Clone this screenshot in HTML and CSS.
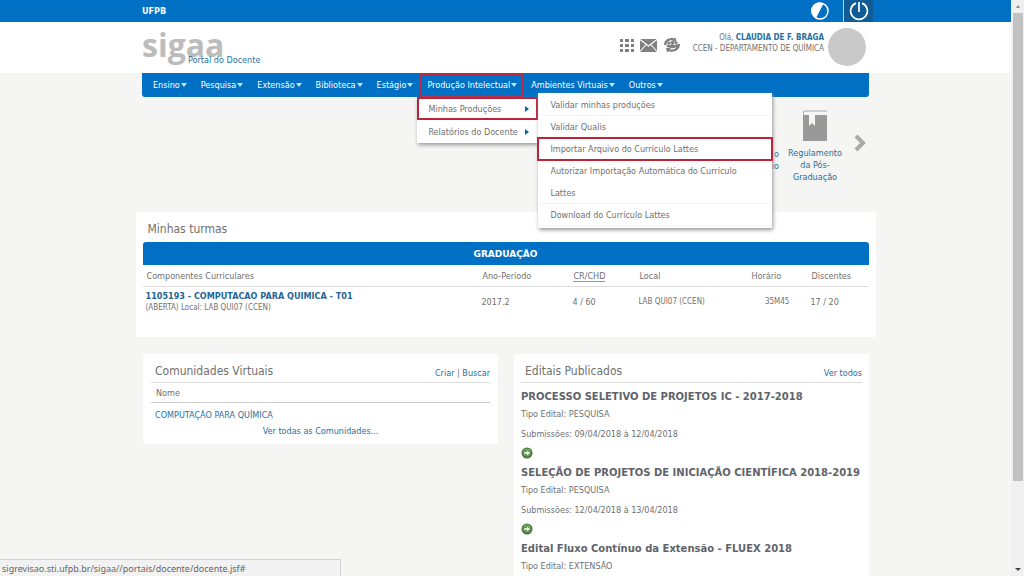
FILE: index.html
```html
<!DOCTYPE html>
<html lang="pt-BR">
<head>
<meta charset="utf-8">
<title>SIGAA - Portal do Docente</title>
<link rel="stylesheet" href="styles.css">
</head>
<body>
<div class="viewport">
  <div class="page">
    <div class="topbar">
      <div class="wrap topbar-row">
        <strong class="org">UFPB</strong>
        <div class="top-actions">
          <button class="icon-btn contrast" aria-label="Contraste">
            <svg width="18" height="18" viewBox="0 0 18 18"><circle cx="9" cy="9" r="8" fill="none" stroke="#fff" stroke-width="1.5"/><path d="M12.5 1.5A8.3 8.3 0 1 0 5 16.3z" fill="#fff"/></svg>
          </button>
          <button class="icon-btn power" aria-label="Sair">
            <svg width="20" height="20" viewBox="0 0 20 20" fill="none" stroke="#fff" stroke-width="1.7"><path d="M7 2.1A8.4 8.4 0 1 0 13 2.1M10 1v10"/></svg>
          </button>
        </div>
      </div>
    </div>
    <header class="header">
      <div class="wrap header-row">
        <div class="brand"><span class="logo">sigaa</span><a class="portal" href="#">Portal do Docente</a></div>
        <div class="user">
          <div class="shortcuts">
            <button class="icon-btn" aria-label="Módulos"><svg width="14" height="14" viewBox="0 0 14 14" fill="#808080"><path d="M0 1h3v3H0zM5 1h4v3H5zM11 1h3v3h-3zM0 6h3v3H0zM5 6h4v3H5zM11 6h3v3h-3zM0 11h3v3H0zM5 11h4v3H5zM11 11h3v3h-3z"/></svg></button>
            <button class="icon-btn" aria-label="Caixa postal"><svg width="17" height="14" viewBox="0 0 17 14"><path d="M0 1h17v13H0z" fill="#808080"/><path d="M0 1.500l8.500 6.500L17 1.500M0 13.500l6.200-7M17 13.500l-6.200-7" fill="none" stroke="#fff" stroke-width="1.100"/></svg></button>
            <button class="icon-btn" aria-label="Trocar vínculo"><svg width="18" height="16" viewBox="0 0 18 16" fill="#808080"><path d="M1 8C1 3 6 0 11 1.500l1.500-1 1 4h-4.500l1-1.200C6 2.500 3.500 5 3.500 8zM17 7c0 6-6 9-11 7.200l-2 1-1-4.200h5l-1.200 1.300c4 1 7.500-1.300 7.500-5.300z"/><circle cx="6" cy="6" r="1.600"/><circle cx="9.500" cy="5.500" r="1.800"/><circle cx="13" cy="5.800" r="1.600"/><path d="M3.500 10c0-3 3-3 3.500-1.500.7-1.800 4.300-1.800 5 0 .8-1.500 3.500-1.500 3.500 1.300l-3 .7c-2 1-5 1-6.500 0z"/></svg></button>
          </div>
          <div class="identity">
            <div>Olá, <a href="#" class="strong">CLAUDIA DE F. BRAGA</a></div>
            <div>CCEN - DEPARTAMENTO DE QUÍMICA</div>
          </div>
          <div class="avatar"></div>
        </div>
      </div>
    </header>
    <div class="wrap">
      <nav class="menu">
        <a class="menu-item" href="#">Ensino<i class="caret"></i></a>
        <a class="menu-item" href="#">Pesquisa<i class="caret"></i></a>
        <a class="menu-item" href="#">Extensão<i class="caret"></i></a>
        <a class="menu-item" href="#">Biblioteca<i class="caret"></i></a>
        <a class="menu-item" href="#">Estágio<i class="caret"></i></a>
        <div class="menu-open">
          <a class="menu-item marked" href="#">Produção Intelectual<i class="caret"></i></a>
          <div class="dropdown">
            <a class="drop-item marked" href="#">Minhas Produções<i class="arrow"></i></a>
            <a class="drop-item" href="#">Relatórios do Docente<i class="arrow"></i></a>
            <div class="submenu">
              <a class="sub-item" href="#">Validar minhas produções</a>
              <a class="sub-item" href="#">Validar Qualis</a>
              <a class="sub-item marked" href="#">Importar Arquivo do Currículo Lattes</a>
              <a class="sub-item" href="#">Autorizar Importação Automática do Currículo Lattes</a>
              <a class="sub-item" href="#">Download do Currículo Lattes</a>
            </div>
          </div>
        </div>
        <a class="menu-item" href="#">Ambientes Virtuais<i class="caret"></i></a>
        <a class="menu-item" href="#">Outros<i class="caret"></i></a>
      </nav>
      <section class="carousel">
        <a class="slide-prev" href="#">o<br>io</a>
        <a class="slide" href="#">
          <svg width="26" height="32" viewBox="0 0 26 32"><path d="M2 1h23M1.500 1v4" fill="none" stroke="#aaa"/><path d="M1 5h6v11l3-3 3 3V5h12v26H1z" fill="#999"/></svg>
          <span>Regulamento<br>da Pós-<br>Graduação</span>
        </a>
        <button class="icon-btn next" aria-label="Próximo"><svg width="12" height="18" viewBox="0 0 12 18"><path d="M2 2l7 7-7 7" fill="none" stroke="#aaa" stroke-width="4"/></svg></button>
      </section>
    </div>
    <section class="classes">
      <h2 class="title">Minhas turmas</h2>
      <table class="table">
        <colgroup><col><col class="c-period"><col class="c-cr"><col class="c-place"><col class="c-time"><col class="c-students"></colgroup>
        <thead>
          <tr><th class="band" colspan="6">GRADUAÇÃO</th></tr>
          <tr class="heads"><th>Componentes Curriculares</th><th>Ano-Período</th><th><abbr class="abbr">CR/CHD</abbr></th><th>Local</th><th>Horário</th><th>Discentes</th></tr>
        </thead>
        <tbody>
          <tr><td><a class="course" href="#">1105193 - COMPUTACAO PARA QUIMICA - T01</a><div class="small">(ABERTA) Local: LAB QUI07 (CCEN)</div></td><td>2017.2</td><td>4 / 60</td><td class="small">LAB QUI07 (CCEN)</td><td class="small time">35M45</td><td>17 / 20</td></tr>
        </tbody>
      </table>
    </section>
    <div class="wrap columns">
      <section class="card">
        <div class="card-head"><h2 class="title">Comunidades Virtuais</h2><span class="links"><a href="#">Criar</a> | <a href="#">Buscar</a></span></div>
        <div class="name-head">Nome</div>
        <a class="community" href="#">COMPUTAÇÃO PARA QUÍMICA</a>
        <a class="see-all" href="#">Ver todas as Comunidades...</a>
      </section>
      <section class="card notices">
        <div class="card-head"><h2 class="title">Editais Publicados</h2><a href="#" class="links">Ver todos</a></div>
        <article class="notice">
          <h3>PROCESSO SELETIVO DE PROJETOS IC - 2017-2018</h3>
          <p>Tipo Edital: PESQUISA</p><p>Submissões: 09/04/2018 à 12/04/2018</p>
          <a class="go" href="#" aria-label="Ver edital"><svg width="12" height="12" viewBox="0 0 12 12"><circle cx="6" cy="6" r="5.500" fill="#3f7a35"/><circle cx="6" cy="5.500" r="4" fill="#72a563"/><path d="M2.500 5h3V3l4 3-4 3V7h-3z" fill="#fff" stroke="#2f6b20" stroke-width=".5"/></svg></a>
        </article>
        <article class="notice">
          <h3>SELEÇÃO DE PROJETOS DE INICIAÇÃO CIENTÍFICA 2018-2019</h3>
          <p>Tipo Edital: PESQUISA</p><p>Submissões: 12/04/2018 à 13/04/2018</p>
          <a class="go" href="#" aria-label="Ver edital"><svg width="12" height="12" viewBox="0 0 12 12"><circle cx="6" cy="6" r="5.500" fill="#3f7a35"/><circle cx="6" cy="5.500" r="4" fill="#72a563"/><path d="M2.500 5h3V3l4 3-4 3V7h-3z" fill="#fff" stroke="#2f6b20" stroke-width=".5"/></svg></a>
        </article>
        <article class="notice">
          <h3>Edital Fluxo Contínuo da Extensão - FLUEX 2018</h3>
          <p>Tipo Edital: EXTENSÃO</p>
        </article>
      </section>
    </div>
  </div>
  <div class="scrollbar"><i class="sb-up"></i><div class="thumb"></div><i class="sb-down"></i></div>
  <div class="status">sigrevisao.sti.ufpb.br/sigaa//portais/docente/docente.jsf#</div>
</div>
</body>
</html>
```
FILE: styles.css
```css
* { box-sizing: border-box; }
body { margin: 0; background: #f5f5f4; color: #707070; font: 9px/12px "DejaVu Sans Condensed", "DejaVu Sans", sans-serif; }
a { color: #286f9f; text-decoration: none; }
h2, h3, p { margin: 0; }
.viewport { display: grid; grid-template-columns: minmax(0, 1fr) 13px; height: 100vh; position: relative; overflow: hidden; }
.page { overflow: hidden; }
.wrap { max-width: 727px; margin: 0 auto; }
.icon-btn { display: flex; align-items: center; justify-content: center; border: 0; padding: 0; background: none; }

.topbar { background: #0070c5; }
.topbar-row { display: flex; justify-content: space-between; align-items: center; height: 22px; }
.org { color: #fff; }
.top-actions { display: flex; gap: 14px; height: 100%; margin-right: -4px; }
.power { width: 30px; background: #105c96; border-left: 1px solid #b5d5ee; }

.header { background: #fff; }
.header-row { display: flex; justify-content: space-between; height: 51px; padding-right: 3px; }
.brand { position: relative; }
.logo { display: block; font: bold 32px/46px "Open Sans", sans-serif; color: #bcbcbc; }
.portal { position: absolute; left: 46px; top: 32px; white-space: nowrap; }
.user { display: flex; align-items: flex-start; padding-top: 6px; }
.shortcuts { display: flex; align-items: center; gap: 6px; padding-top: 9px; margin-right: 12px; }
.identity { text-align: right; font-size: 8px; line-height: 11px; padding-top: 4px; margin-right: 4px; }
.strong { font-weight: bold; }
.avatar { width: 38px; height: 38px; border-radius: 50%; background: #c9c9c9; }

.menu { display: flex; height: 24px; padding-left: 4px; background: #0070c5; border-radius: 0 0 3px 3px; }
.menu-item { display: flex; align-items: center; gap: 1px; padding: 0 7px; color: #fff; height: 24px; white-space: nowrap; }
.caret { border: 3px solid transparent; border-top: 4px solid #c2e5f8; border-bottom: 0; }
.menu-open { position: relative; }
.menu-open > .marked { box-shadow: inset 0 0 0 2px #b52a46; }
.dropdown { position: absolute; z-index: 2; top: 24px; left: -3px; width: 121px; background: #fff; box-shadow: 1px 2px 4px #999; }
.drop-item { display: flex; align-items: center; justify-content: space-between; height: 23px; padding: 0 9px 0 11px; color: #707070; white-space: nowrap; }
.drop-item.marked { box-shadow: inset 0 0 0 2px #c0223a; }
.arrow { border: 3px solid transparent; border-left: 4px solid #0b62a4; border-right: 0; }
.submenu { position: absolute; top: -4px; left: 100%; width: 234px; padding: 1px 0 2px; background: #fff; box-shadow: 1px 2px 4px #999; }
.sub-item { display: block; padding: 0 20px 0 12px; line-height: 22px; color: #707070; box-shadow: inset 0 -1px #f4f4f4; }
.sub-item.marked { box-shadow: 0 0 0 1px #c0223a, inset 0 0 0 1px #c0223a; position: relative; }

.carousel { display: flex; justify-content: flex-end; height: 115px; padding-top: 13px; text-align: center; }
.slide-prev { padding-top: 38px; text-align: right; }
.slide { width: 72px; }
.slide span { display: block; padding-top: 2px; }
.next { height: 66px; width: 18px; }

.classes { max-width: 740px; margin: 0 auto; padding: 8px 7px 17px; min-height: 125px; background: #fff; }
.title { font-size: 12px; line-height: 18px; font-weight: normal; }
.classes .title { padding: 0 5px 4px; }
.table { width: 100%; border-collapse: separate; border-spacing: 0; table-layout: fixed; }
.table th { text-align: left; font-weight: normal; padding: 0 4px; }
.table .band { height: 23px; background: #0070c5; color: #fff; text-align: center; font-family: "DejaVu Sans", sans-serif; font-weight: bold; border-radius: 3px 3px 0 0; }
.heads th { height: 22px; border-bottom: 1px solid #ddd; }
.table td { height: 29px; padding: 0 3px; }
.c-period { width: 91px; }
.c-cr { width: 66px; }
.c-place { width: 112px; }
.c-time { width: 60px; }
.c-students { width: 61px; }
.table .time { padding-right: 18px; text-align: right; }
.abbr { border-bottom: 1px solid #999; }
.course { font-weight: bold; color: #1f6597; }
.table .small { font-size: 8px; }

.columns { display: grid; grid-template-columns: 355px 1fr; column-gap: 16px; align-items: start; padding: 17px 0 0 1px; }
.card { background: #fff; border-radius: 3px; padding: 7px 8px; }
.card-head { display: flex; justify-content: space-between; align-items: flex-end; height: 22px; border-bottom: 1px solid #ddd; padding: 0 0 2px 4px; }
.card-head .links { line-height: 14px; }
.name-head { height: 20px; line-height: 21px; padding-left: 5px; border-bottom: 1px solid #ccc; }
.community { display: block; padding: 6px 4px 0; }
.see-all { display: block; text-align: center; padding: 4px 0 0; }
.notices { padding: 7px; }
.notice h3 { font: bold 10px/15px "DejaVu Sans", sans-serif; color: #60646a; padding-top: 6px; }
.notice p { line-height: 20px; }
.go { display: flex; height: 15px; align-items: flex-end; }

.scrollbar { display: flex; flex-direction: column; align-items: center; background: #f0f0f0; padding: 5px 0; }
.sb-up { border: 2px solid transparent; border-bottom: 3px solid #888; border-top: 0; }
.thumb { width: 10px; height: 468px; margin: 5px 0 auto; background: #c1c1c1; }
.sb-down { border: 3px solid transparent; border-top: 3px solid #444; border-bottom: 0; }
.status { position: absolute; left: 0; bottom: 0; width: 341px; height: 17px; padding-left: 2px; border: 1px solid #d4d4d4; border-width: 1px 1px 0 0; background: #f2f2f2; font: 9px/17px "Noto Sans", sans-serif; color: #666; }
```
